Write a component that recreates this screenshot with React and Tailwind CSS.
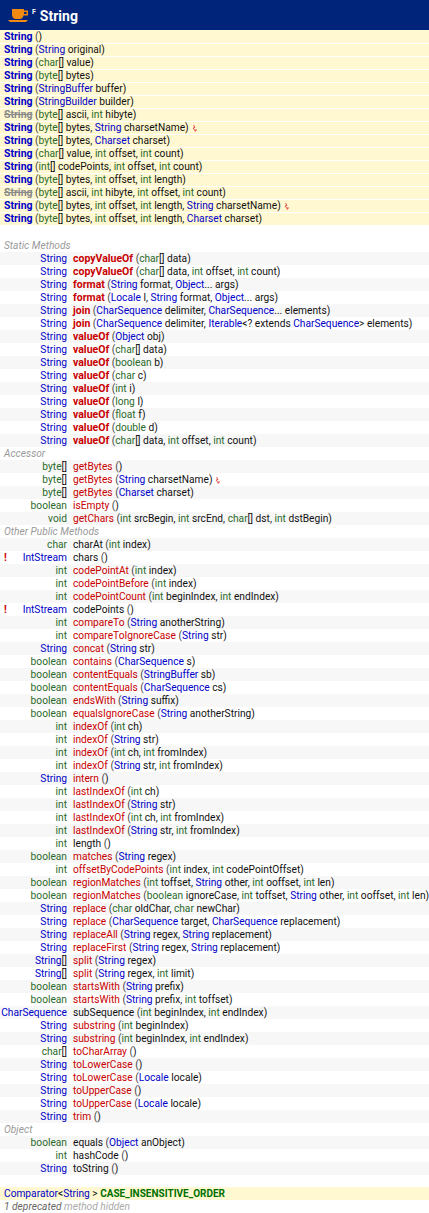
import React from 'react';

const ctors = [
  { p: '' },
  { p: 'String original' },
  { p: 'char[] value' },
  { p: 'byte[] bytes' },
  { p: 'StringBuffer buffer' },
  { p: 'StringBuilder builder' },
  { p: 'byte[] ascii, int hibyte', dep: true },
  { p: 'byte[] bytes, String charsetName', thr: true },
  { p: 'byte[] bytes, Charset charset' },
  { p: 'char[] value, int offset, int count' },
  { p: 'int[] codePoints, int offset, int count' },
  { p: 'byte[] bytes, int offset, int length' },
  { p: 'byte[] ascii, int hibyte, int offset, int count', dep: true },
  { p: 'byte[] bytes, int offset, int length, String charsetName', thr: true },
  { p: 'byte[] bytes, int offset, int length, Charset charset' },
];

const statics = [
  ['String', 'copyValueOf', 'char[] data'],
  ['String', 'copyValueOf', 'char[] data, int offset, int count'],
  ['String', 'format', 'String format, Object... args'],
  ['String', 'format', 'Locale l, String format, Object... args'],
  ['String', 'join', 'CharSequence delimiter, CharSequence... elements'],
  ['String', 'join', 'CharSequence delimiter, Iterable<? extends CharSequence> elements'],
  ['String', 'valueOf', 'Object obj'],
  ['String', 'valueOf', 'char[] data'],
  ['String', 'valueOf', 'boolean b'],
  ['String', 'valueOf', 'char c'],
  ['String', 'valueOf', 'int i'],
  ['String', 'valueOf', 'long l'],
  ['String', 'valueOf', 'float f'],
  ['String', 'valueOf', 'double d'],
  ['String', 'valueOf', 'char[] data, int offset, int count'],
];

// fourth item: k = black name (no red), t = throws mark, n = new marker
const accessors = [
  ['byte[]', 'getBytes', ''],
  ['byte[]', 'getBytes', 'String charsetName', 't'],
  ['byte[]', 'getBytes', 'Charset charset'],
  ['boolean', 'isEmpty', ''],
  ['void', 'getChars', 'int srcBegin, int srcEnd, char[] dst, int dstBegin'],
];

const others = [
  ['char', 'charAt', 'int index', 'k'],
  ['IntStream', 'chars', '', 'kn'],
  ['int', 'codePointAt', 'int index'],
  ['int', 'codePointBefore', 'int index'],
  ['int', 'codePointCount', 'int beginIndex, int endIndex'],
  ['IntStream', 'codePoints', '', 'kn'],
  ['int', 'compareTo', 'String anotherString'],
  ['int', 'compareToIgnoreCase', 'String str'],
  ['String', 'concat', 'String str'],
  ['boolean', 'contains', 'CharSequence s'],
  ['boolean', 'contentEquals', 'StringBuffer sb'],
  ['boolean', 'contentEquals', 'CharSequence cs'],
  ['boolean', 'endsWith', 'String suffix'],
  ['boolean', 'equalsIgnoreCase', 'String anotherString'],
  ['int', 'indexOf', 'int ch'],
  ['int', 'indexOf', 'String str'],
  ['int', 'indexOf', 'int ch, int fromIndex'],
  ['int', 'indexOf', 'String str, int fromIndex'],
  ['String', 'intern', ''],
  ['int', 'lastIndexOf', 'int ch'],
  ['int', 'lastIndexOf', 'String str'],
  ['int', 'lastIndexOf', 'int ch, int fromIndex'],
  ['int', 'lastIndexOf', 'String str, int fromIndex'],
  ['int', 'length', '', 'k'],
  ['boolean', 'matches', 'String regex'],
  ['int', 'offsetByCodePoints', 'int index, int codePointOffset'],
  ['boolean', 'regionMatches', 'int toffset, String other, int ooffset, int len'],
  ['boolean', 'regionMatches', 'boolean ignoreCase, int toffset, String other, int ooffset, int len'],
  ['String', 'replace', 'char oldChar, char newChar'],
  ['String', 'replace', 'CharSequence target, CharSequence replacement'],
  ['String', 'replaceAll', 'String regex, String replacement'],
  ['String', 'replaceFirst', 'String regex, String replacement'],
  ['String[]', 'split', 'String regex'],
  ['String[]', 'split', 'String regex, int limit'],
  ['boolean', 'startsWith', 'String prefix'],
  ['boolean', 'startsWith', 'String prefix, int toffset'],
  ['CharSequence', 'subSequence', 'int beginIndex, int endIndex', 'k'],
  ['String', 'substring', 'int beginIndex'],
  ['String', 'substring', 'int beginIndex, int endIndex'],
  ['char[]', 'toCharArray', ''],
  ['String', 'toLowerCase', ''],
  ['String', 'toLowerCase', 'Locale locale'],
  ['String', 'toUpperCase', ''],
  ['String', 'toUpperCase', 'Locale locale'],
  ['String', 'trim', ''],
];

const objects = [
  ['boolean', 'equals', 'Object anObject', 'k'],
  ['int', 'hashCode', '', 'k'],
  ['String', 'toString', '', 'k'],
];

const prims = ['byte', 'char', 'int', 'long', 'float', 'double', 'boolean', 'void'];
const classes = ['String', 'Object', 'Locale', 'Charset', 'CharSequence', 'StringBuffer', 'StringBuilder', 'IntStream', 'Iterable', 'Comparator'];

// colours a signature word by word
function Sig({ text }) {
  const parts = text.split(/(\b\w+\b)/).filter(Boolean);
  return parts.map((w, i) => {
    let cls = 'text-[#111]';
    if (prims.includes(w)) cls = 'text-[#2a6a2a]';
    if (classes.includes(w)) cls = 'text-[#0000c8]';
    return <span key={i} className={cls}>{w}</span>;
  });
}

function Bolt() {
  return (
    <svg width="6" height="8" viewBox="0 0 6 8" className="inline-block ml-[3px] align-[-1px]">
      <path d="M1.5 1 L3 3.5 L1 4 L3.5 7 M4 5 V7 H2.5" fill="none" stroke="#e8504a" strokeWidth="1" />
    </svg>
  );
}

function Label({ children }) {
  return <div className="h-[13px] leading-[13px] pl-1 italic text-[#9a9a9a]">{children}</div>;
}

function Method({ row, index, bold }) {
  const [ret, name, params, flags = ''] = row;
  const black = flags.includes('k');
  const nameCls = bold ? 'font-bold text-[10.5px] text-[#c80000]' : black ? 'text-[#111]' : 'text-[#c80000]';
  const base = ret.replace('[]', '');
  const arr = ret.endsWith('[]');
  return (
    <div className={`flex h-[13px] leading-[13px] whitespace-nowrap ${index % 2 === 0 ? 'bg-[#f7f7f7]' : 'bg-white'}`}>
      {flags.includes('n') && <span className="absolute left-1 font-bold text-[#d00000]">!</span>}
      <div className="relative z-10 w-[67px] shrink-0 text-right">
        <span className={prims.includes(base) ? 'text-[#2a6a2a]' : 'text-[#0000c8]'}>{base}</span>
        {arr && <span className="text-[#111]">[]</span>}
      </div>
      <div className="relative z-10 ml-[6px]">
        <span className={nameCls}>{name}</span>
        <span className="text-[#444]"> (</span>
        <Sig text={params} />
        <span className="text-[#111]">)</span>
        {flags.includes('t') && <Bolt />}
      </div>
    </div>
  );
}

function Section({ rows, bold }) {
  return rows.map((r, i) => <Method key={i} row={r} index={i} bold={bold} />);
}

export default function App() {
  return (
    <div className="w-[429px] h-[1213px] bg-white overflow-hidden text-[10.2px] font-['Roboto',sans-serif]">
      <div className="h-[30px] bg-[#00247a] flex items-center pl-2">
        <svg width="20" height="20" viewBox="0 0 20 20" className="shrink-0">
          <path d="M4 4 H16 V5.5 H20 V10.5 H15.5 Q14.5 14 12 14 H8 Q4.5 14 4 10 Z" fill="#f08a12" />
          <path d="M16 7 H18.5 V9 H16 Z" fill="#00247a" />
          <path d="M0 15 H20 L18 17 H2 Z" fill="#f08a12" />
        </svg>
        <span className="text-white text-[7px] font-bold ml-[4px] mb-[5px]">F</span>
        <span className="text-white text-[14px] font-bold ml-[4px] mt-[2px]">String</span>
      </div>

      <div className="bg-[#fff8d0] pt-px">
        {ctors.map((c, i) => (
          <div key={i} className="h-[13px] leading-[12px] pl-1 border-b border-white whitespace-nowrap">
            <span className={c.dep ? 'font-bold text-[10.5px] text-[#8a8a8a] line-through' : 'font-bold text-[10.5px] text-[#0000c8]'}>String</span>
            <span className="text-[#444]"> (</span>
            <Sig text={c.p} />
            <span className="text-[#111]">)</span>
            {c.thr && <Bolt />}
          </div>
        ))}
      </div>

      <div className="h-[13px]" />
      <Label>Static Methods</Label>
      <Section rows={statics} bold />
      <Label>Accessor</Label>
      <Section rows={accessors} />
      <Label>Other Public Methods</Label>
      <Section rows={others} />
      <Label>Object</Label>
      <Section rows={objects} />

      <div className="h-3" />
      <div className="h-[13px] leading-[13px] pl-1 bg-[#fff8d0] whitespace-nowrap">
        <span className="text-[#0000c8]">Comparator</span>
        <span className="text-[#111]">&lt;</span>
        <span className="text-[#0000c8]">String</span>
        <span className="text-[#111]"> &gt; </span>
        <span className="font-bold text-[10px] text-[#007000]">CASE_INSENSITIVE_ORDER</span>
      </div>
      <div className="h-[13px] leading-[13px] pl-1 italic">
        <span className="text-[#666]">1 deprecated</span>
        <span className="text-[#aaa]"> method hidden</span>
      </div>
    </div>
  );
}
